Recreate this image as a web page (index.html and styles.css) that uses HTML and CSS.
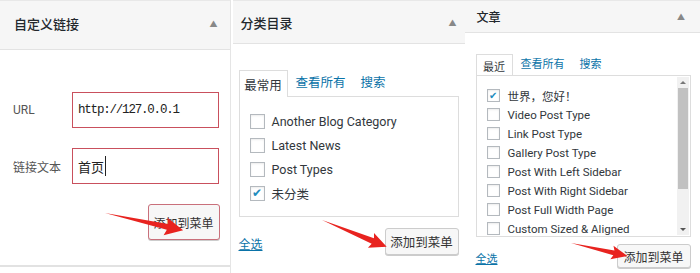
FILE: index.html
```html
<!DOCTYPE html>
<html lang="zh-CN">
<head>
    <meta charset="UTF-8" />
    <title>添加菜单项</title>
    <link rel="stylesheet" href="styles.css">
</head>
<body>
    <div class="strip">
        <!-- 自定义链接 -->
        <div class="panel p1">
            <div class="head">
                <h3>自定义链接</h3>
                <span class="toggle">&#9650;</span>
            </div>
            <div class="custom">
                <div class="field">
                    <label>URL</label>
                    <div class="input mono">http://127.0.0.1</div>
                </div>
                <div class="field">
                    <label>链接文本</label>
                    <div class="input">首页<span class="caret"></span></div>
                </div>
                <div class="actions end">
                    <button class="add hot">添加到菜单</button>
                </div>
            </div>
            <div class="rule"></div>
        </div>

        <!-- 分类目录 -->
        <div class="panel p2">
            <div class="head">
                <h3>分类目录</h3>
                <span class="toggle">&#9650;</span>
            </div>
            <div class="inner">
                <div class="tabs">
                    <span class="tab">最常用</span>
                    <a class="tab-link">查看所有</a>
                    <a class="tab-link">搜索</a>
                </div>
                <ul class="checks">
                    <li><span class="box"></span>Another Blog Category</li>
                    <li><span class="box"></span>Latest News</li>
                    <li><span class="box"></span>Post Types</li>
                    <li><span class="box on"></span>未分类</li>
                </ul>
                <div class="actions">
                    <a class="all">全选</a>
                    <button class="add">添加到菜单</button>
                </div>
            </div>
        </div>

        <!-- 文章 -->
        <div class="panel p3">
            <div class="head">
                <h3>文章</h3>
                <span class="toggle">&#9650;</span>
            </div>
            <div class="inner">
                <div class="tabs">
                    <span class="tab">最近</span>
                    <a class="tab-link">查看所有</a>
                    <a class="tab-link">搜索</a>
                </div>
                <div class="scroll-box">
                    <ul class="checks">
                        <li><span class="box on"></span>世界，您好！</li>
                        <li><span class="box"></span>Video Post Type</li>
                        <li><span class="box"></span>Link Post Type</li>
                        <li><span class="box"></span>Gallery Post Type</li>
                        <li><span class="box"></span>Post With Left Sidebar</li>
                        <li><span class="box"></span>Post With Right Sidebar</li>
                        <li><span class="box"></span>Post Full Width Page</li>
                        <li><span class="box"></span>Custom Sized &amp; Aligned</li>
                    </ul>
                    <div class="scrollbar">
                        <span class="arrow up"></span>
                        <span class="thumb"></span>
                        <span class="arrow down"></span>
                    </div>
                </div>
                <div class="actions">
                    <a class="all">全选</a>
                    <button class="add">添加到菜单</button>
                </div>
            </div>
        </div>
    </div>

    <!-- red annotation arrows -->
    <svg class="arrows" width="700" height="273" viewBox="0 0 700 273">
        <g fill="#e8231f">
            <polygon transform="translate(105 213) rotate(12.5)" points="0,0 64,-3 62,-9 80,0 62,9 64,3" />
            <polygon transform="translate(322 220) rotate(22.5)" points="0,0 55,-3 53,-8 70,0 53,8 55,3" />
            <polygon transform="translate(571 243) rotate(13)" points="0,0 44,-2.5 42,-7 58,0 42,7 44,2.5" />
        </g>
    </svg>
</body>
</html>
```

FILE: styles.css
```css
body {
    margin: 0;
    padding: 0;
    background: #fff;
    font-family: Roboto, "Noto Sans CJK SC", sans-serif;
    color: #32373c;
}

.strip {
    display: flex;
    width: 700px;
    height: 273px;
    overflow: hidden;
}

.panel {
    display: flex;
    flex-direction: column;
    background: #fff;
}

.head {
    display: flex;
    justify-content: space-between;
    align-items: center;
    background: #f6f6f6;
    border-bottom: 1px solid #e3e3e3;
    border-top: 1px solid #e8e8e8;
}

.head h3 {
    margin: 0;
    font-weight: 500;
    color: #23282d;
}

.toggle {
    color: #888;
    font-size: 8px;
}

/* panel 1 */
.p1 {
    width: 230px;
    margin-right: 2px;
    border-right: 1px solid #e5e5e5;
}

    .p1 .head {
        height: 44px;
        padding: 0 12px 4px 14px;
    }

    .p1 .head h3 {
        font-size: 13px;
    }

.custom {
    padding: 42px 10px 0 13px;
    display: flex;
    flex-direction: column;
    gap: 20px;
}

.field {
    display: flex;
    align-items: center;
}

    .field label {
        width: 59px;
        font-size: 12px;
        color: #555;
    }

.input {
    box-sizing: border-box;
    width: 147px;
    height: 36px;
    border: 1px solid #c9505d;
    display: flex;
    align-items: center;
    padding-left: 5px;
    font-size: 13px;
    color: #222;
}

    .input.mono {
        font-family: "Liberation Mono", "DejaVu Sans Mono", monospace;
        font-size: 12.5px;
        letter-spacing: -1.2px;
    }

.caret {
    display: inline-block;
    width: 1px;
    height: 20px;
    background: #222;
    margin-left: 1px;
}

.actions {
    display: flex;
    justify-content: space-between;
    align-items: center;
}

    .actions.end {
        justify-content: flex-end;
    }

.add {
    font-family: "Noto Sans CJK SC", sans-serif;
    background: #f7f7f7;
    border: 1px solid #ccc;
    border-radius: 3px;
    color: #333;
    padding: 0;
    box-shadow: 0 1px 0 #ccc;
}

.add.hot {
    width: 72px;
    height: 36px;
    font-size: 12px;
    border-color: #c9707b;
}

.rule {
    margin-top: 25px;
    height: 2px;
    background: #e2e2e2;
}

/* shared tabs / lists */
.tabs {
    display: flex;
    align-items: flex-end;
}

.tab {
    border: 1px solid #ddd;
    border-bottom: none;
    background: #fff;
    box-sizing: border-box;
    display: flex;
    align-items: center;
    justify-content: center;
    color: #32373c;
    position: relative;
    top: 1px;
}

.tab-link {
    color: #0a73a8;
}

.checks {
    list-style: none;
    margin: 0;
    border: 1px solid #ddd;
    box-sizing: border-box;
}

    .checks li {
        display: flex;
        align-items: center;
        white-space: nowrap;
    }

.box {
    box-sizing: border-box;
    border: 1px solid #b4b9be;
    background: #fff;
    box-shadow: inset 0 1px 2px rgba(0, 0, 0, 0.08);
    display: inline-flex;
    align-items: center;
    justify-content: center;
    flex: none;
}

    .box.on::before {
        content: "\2714";
        color: #1e8cbe;
    }

.all {
    color: #0a73a8;
    text-decoration: underline;
}

/* panel 2 */
.p2 {
    width: 232px;
}

    .p2 .head {
        height: 42px;
        padding: 0 8px;
    }

    .p2 .head h3 {
        font-size: 13px;
    }

    .p2 .inner {
        padding: 25px 6px 0 6px;
    }

    .p2 .tabs {
        height: 27px;
        font-size: 12.5px;
    }

    .p2 .tab {
        width: 49px;
        height: 27px;
        margin-right: 8px;
    }

    .p2 .tab-link {
        margin-right: 15px;
        padding-bottom: 5px;
    }

    .p2 .checks {
        width: 220px;
        height: 121px;
        padding: 12px 0 0 10px;
        font-size: 12.5px;
    }

    .p2 .checks li {
        height: 24px;
        gap: 7px;
    }

    .p2 .box {
        width: 15px;
        height: 15px;
        font-size: 12px;
    }

    .p2 .actions {
        margin-top: 11px;
        width: 220px;
    }

    .p2 .all {
        font-size: 12px;
        margin-top: 4px;
    }

    .p2 .add {
        width: 74px;
        height: 27px;
        font-size: 12.5px;
    }

/* panel 3 */
.p3 {
    width: 236px;
}

    .p3 .head {
        height: 31px;
        padding: 0 15px 0 12px;
    }

    .p3 .head h3 {
        font-size: 12px;
    }

    .p3 .inner {
        padding: 20px 8px 0 11px;
    }

    .p3 .tabs {
        height: 22px;
        font-size: 11px;
    }

    .p3 .tab {
        width: 37px;
        height: 22px;
        margin-right: 8px;
    }

    .p3 .tab-link {
        margin-right: 15px;
        padding-bottom: 4px;
    }

.scroll-box {
    position: relative;
    width: 215px;
    height: 162px;
    overflow: hidden;
}

    .p3 .checks {
        width: 215px;
        height: 162px;
        padding: 10px 0 0 10px;
        font-size: 11.5px;
    }

    .p3 .checks li {
        height: 19px;
        gap: 8px;
    }

    .p3 .box {
        width: 13px;
        height: 13px;
        font-size: 10px;
    }

.scrollbar {
    position: absolute;
    right: 2px;
    top: 2px;
    bottom: 2px;
    width: 12px;
    background: #f1f1f1;
}

.thumb {
    position: absolute;
    left: 1px;
    right: 1px;
    top: 11px;
    height: 101px;
    background: #c1c1c1;
}

.arrow {
    position: absolute;
    left: 3px;
    width: 0;
    height: 0;
    border-left: 3px solid transparent;
    border-right: 3px solid transparent;
}

    .arrow.up {
        top: 4px;
        border-bottom: 3px solid #777;
    }

    .arrow.down {
        bottom: 4px;
        border-top: 3px solid #555;
    }

    .p3 .actions {
        margin-top: 7px;
        width: 215px;
    }

    .p3 .all {
        font-size: 11px;
        margin-top: 4px;
    }

    .p3 .add {
        width: 74px;
        height: 24px;
        font-size: 12px;
    }

.arrows {
    position: absolute;
    left: 0;
    top: 0;
    pointer-events: none;
}
```
